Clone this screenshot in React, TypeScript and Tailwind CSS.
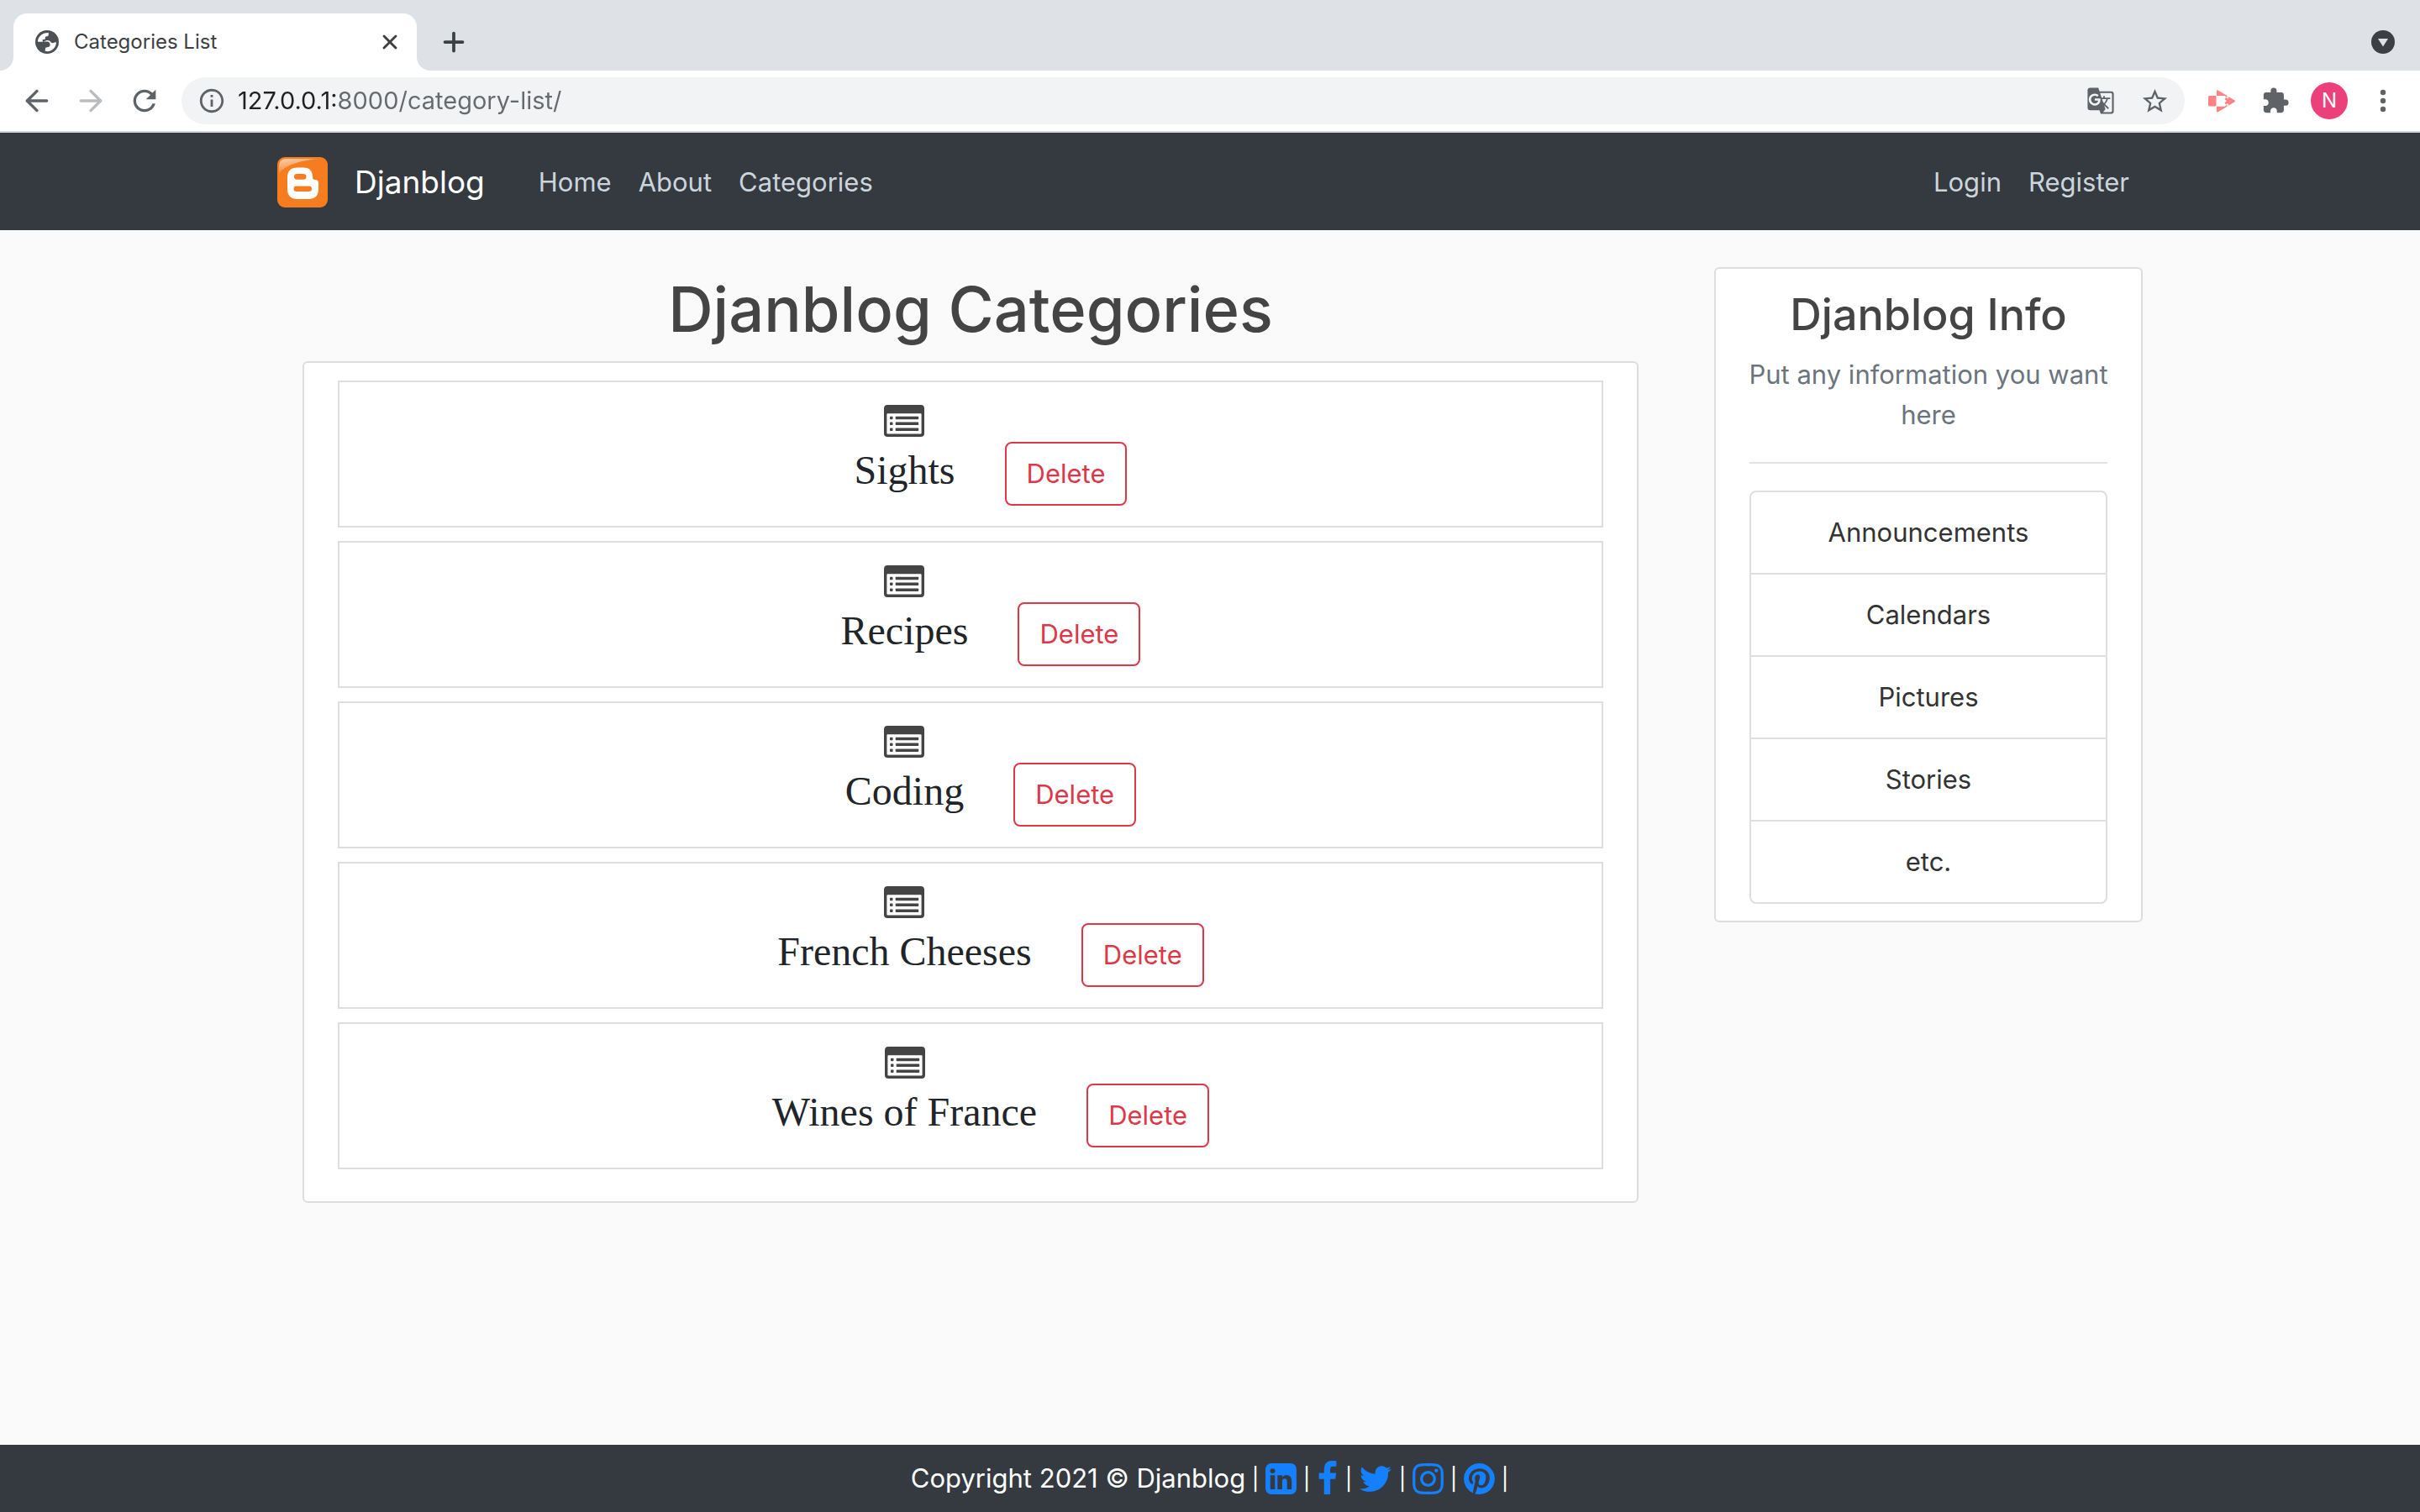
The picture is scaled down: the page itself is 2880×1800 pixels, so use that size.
import React from "react";
import { ArrowLeft, ArrowRight, Plus, X } from "lucide-react";
import { MdExtension, MdGTranslate, MdInfoOutline, MdRefresh, MdStarBorder } from "react-icons/md";

const categories = ["Sights", "Recipes", "Coding", "French Cheeses", "Wines of France"];
const infoItems = ["Announcements", "Calendars", "Pictures", "Stories", "etc."];

const socials = [
  {
    name: "LinkedIn",
    viewBox: "128 0 1536 1792",
    size: "w-[37px]",
    d: "M365 1414h231v-694h-231v694zm246-908q-1-52-36-86t-93-34-94.5 34-36.5 86q0 51 35.5 85.5t92.5 34.5h1q59 0 95-34.5t36-85.5zm585 908h231v-398q0-154-73-233t-193-79q-136 0-209 117h2v-101h-231q3 66 0 694h231v-388q0-38 7-56 15-35 45-59.5t74-24.5q116 0 116 157v371zm468-998v960q0 119-84.5 203.5t-203.5 84.5h-960q-119 0-203.5-84.5t-84.5-203.5v-960q0-119 84.5-203.5t203.5-84.5h960q119 0 203.5 84.5t84.5 203.5z",
  },
  {
    name: "Facebook",
    viewBox: "369 0 1084 1792",
    size: "w-[26px]",
    d: "M1343 12v264h-157q-86 0-116 36t-30 108v189h293l-39 296h-254v759h-306v-759h-255v-296h255v-218q0-186 104-288.5t277-102.5q147 0 228 12z",
  },
  {
    name: "Twitter",
    viewBox: "62 0 1667 1792",
    size: "w-[40px]",
    d: "M1684 408q-67 98-162 167 1 14 1 42 0 130-38 259.5t-115.5 248.5-184.5 210.5-258 146-323 54.5q-271 0-496-145 35 4 78 4 225 0 401-138-105-2-188-64.5t-114-159.5q33 5 61 5 43 0 85-11-112-23-185.5-111.5t-73.5-205.5v-4q68 38 146 41-66-44-105-115t-39-154q0-88 44-163 121 149 294.5 238.5t371.5 99.5q-8-38-8-74 0-134 94.5-228.5t228.5-94.5q140 0 236 102 109-21 205-78-37 115-142 178 93-10 186-50z",
  },
  {
    name: "Instagram",
    viewBox: "128 0 1536 1792",
    size: "w-[37px]",
    d: "M1152 896q0-106-75-181t-181-75-181 75-75 181 75 181 181 75 181-75 75-181zm138 0q0 164-115 279t-279 115-279-115-115-279 115-279 279-115 279 115 115 279zm108-410q0 38-27 65t-65 27-65-27-27-65 27-65 65-27 65 27 27 65zm-502-220q-7 0-76.5-.5t-105.5 0-96.5 3-103 10-71.5 18.5q-50 20-88 58t-58 88q-11 29-18.5 71.5t-10 103-3 96.5 0 105.5.5 76.5-.5 76.5 0 105.5 3 96.5 10 103 18.5 71.5q20 50 58 88t88 58q29 11 71.5 18.5t103 10 96.5 3 105.5 0 76.5-.5 76.5.5 105.5 0 96.5-3 103-10 71.5-18.5q50-20 88-58t58-88q11-29 18.5-71.5t10-103 3-96.5 0-105.5-.5-76.5.5-76.5 0-105.5-3-96.5-10-103-18.5-71.5q-20-50-58-88t-88-58q-29-11-71.5-18.5t-103-10-96.5-3-105.5 0-76.5.5zm768 630q0 229-5 317-10 208-124 322t-322 124q-88 5-317 5t-317-5q-208-10-322-124t-124-322q-5-88-5-317t5-317q10-208 124-322t322-124q88-5 317-5t317 5q208 10 322 124t124 322q5 88 5 317z",
  },
  {
    name: "Pinterest",
    viewBox: "128 0 1536 1792",
    size: "w-[37px]",
    d: "M1664 896q0 209-103 385.5t-279.5 279.5-385.5 103q-111 0-218-32 59-93 78-164 9-34 54-211 20 39 73 67.5t114 28.5q121 0 216-68.5t147-188.5 52-270q0-114-59.5-214t-172.5-163-255-63q-105 0-196 29t-154.5 77-109 110.5-67 129.5-21.5 134q0 104 40 183t117 111q30 12 38-20 2-7 8-31t8-30q6-23-11-43-51-61-51-151 0-151 104.5-259.5t273.5-108.5q151 0 235.5 82t84.5 213q0 170-68.5 289t-175.5 119q-61 0-98-43.5t-23-104.5q8-35 26.5-93.5t30-103 11.5-75.5q0-50-27-83t-77-33q-62 0-105 57t-43 142q0 73 25 122l-99 418q-17 70-13 177-206-91-333-281t-127-423q0-209 103-385.5t279.5-279.5 385.5-103 385.5 103 279.5 279.5 103 385.5z",
  },
];

function GlobeIcon() {
  return (
    <svg viewBox="0 0 28 28" className="size-7 shrink-0" aria-hidden="true">
      <circle cx="14" cy="14" r="14" fill="#4d5156" />
      <path
        fill="#fff"
        d="M3 13.8C3 8 8 3 15.8 3.1V5.2C15.8 6.6 14.8 7.2 13.6 7.2C12.2 7.2 11.6 8 11.8 9.4C11.9 10.6 11 11 9.6 11.1C8.6 11.2 8.4 12.4 9 13.6H14.4C16.2 13.8 17.6 15.2 17.6 17C17.6 19.4 16 20.2 14.2 20.2C12.4 20.2 11.8 21 11.8 22.4L11.6 24.8C18.6 26.6 25 21 24.9 14.2L23 14.4C21.4 15.6 19.6 15.4 18.4 14.2C17.2 12.8 16.4 11.4 12.4 12.4L9 13.8Z"
      />
    </svg>
  );
}

function ArrowExtensionIcon() {
  return (
    <svg viewBox="0 0 32 27" className="h-[27px] w-8" fill="#ff8383" aria-hidden="true">
      <path d="M1.5 7H9.5V19.5H1.5Q0 19.5 0 18V8.500Q0 7 1.500 7Z" />
      <path d="M10 1.2Q10 -.5 11.600 .4L22.500 7V9.200L19.500 7H10Z" />
      <path d="M10 25.600Q10 27.200 11.600 26.300L22.500 19.700V17.500L19.500 19.700H10Z" />
      <path d="M23.800 7.900L31.200 12.300Q32.600 13.300 31.200 14.400L23.800 18.800V16L21 17.600L19.500 15.500L22 13.300L19.500 11L21 9L23.800 10.700Z" />
    </svg>
  );
}

function BloggerLogo() {
  return (
    <svg viewBox="0 0 60 60" className="size-[60px]" aria-hidden="true">
      <defs>
        <linearGradient id="gloss" x1="0" y1="0" x2="0.5" y2="1">
          <stop offset="0" stopColor="#fff" stopOpacity="0.65" />
          <stop offset="1" stopColor="#fff" stopOpacity="0" />
        </linearGradient>
      </defs>
      <rect width="60" height="60" rx="9" fill="#f57d20" />
      <path d="M2 19V11Q2 2 11 2H49C30 4 12 8 2 19Z" fill="url(#gloss)" />
      <path
        fill="#fff"
        fillRule="evenodd"
        d="M24 12.500H31Q42 12.500 42 24Q42 27 45 27Q49 27.200 49 31V38Q49 50 37 50H24Q12 50 12 38V24Q12 12.500 24 12.500ZM23.500 20Q20 20 20 23.300Q20 26.700 23.500 26.700H31Q34.500 26.700 34.500 23.300Q34.500 20 31 20ZM23 34.500Q19.500 34.500 19.500 37.800Q19.500 41 23 41H37.500Q41 41 41 37.800Q41 34.500 37.500 34.500Z"
      />
    </svg>
  );
}

function ListIcon() {
  return (
    <svg viewBox="0 0 48 38" className="h-[38px] w-12" aria-hidden="true">
      <path
        fill="#444"
        fillRule="evenodd"
        d="M4.300 0H43.700Q48 0 48 4.300V33.700Q48 38 43.700 38H4.300Q0 38 0 33.700V4.300Q0 0 4.300 0ZM4.300 10.300Q3.400 10.300 3.400 11.200V33.500Q3.400 34.400 4.300 34.400H43.700Q44.600 34.400 44.600 33.500V11.200Q44.600 10.300 43.700 10.300Z"
      />
      <g fill="#444">
        <rect x="7" y="13.700" width="3.500" height="3.500" rx="0.800" />
        <rect x="7" y="20.600" width="3.500" height="3.500" rx="0.800" />
        <rect x="7" y="27.500" width="3.500" height="3.500" rx="0.800" />
        <rect x="13.700" y="13.700" width="27.500" height="3.500" rx="0.800" />
        <rect x="13.700" y="20.600" width="27.500" height="3.500" rx="0.800" />
        <rect x="13.700" y="27.500" width="27.500" height="3.500" rx="0.800" />
      </g>
    </svg>
  );
}

function BrowserChrome() {
  return (
    <div>
      <div className="flex items-center bg-[#dee1e6] pt-4 pr-[30px]">
        <svg viewBox="0 0 16 16" className="size-4 self-end" aria-hidden="true">
          <path d="M16 0V16H0A16 16 0 0 0 16 0Z" fill="#fff" />
        </svg>
        <div className="flex h-[68px] w-[480px] items-center rounded-t-2xl bg-white pr-[18px] pl-[26px]">
          <GlobeIcon />
          <span className="ml-[18px] flex-1 text-2xl text-[#3c4043]">Categories List</span>
          <button aria-label="Close tab" className="text-[#3c4043]">
            <X size={28} strokeWidth={2.500} />
          </button>
        </div>
        <svg viewBox="0 0 16 16" className="size-4 self-end" aria-hidden="true">
          <path d="M0 0V16H16A16 16 0 0 1 0 0Z" fill="#fff" />
        </svg>
        <button aria-label="New tab" className="ml-2.5 text-[#3c4043]">
          <Plus size={36} strokeWidth={2.500} />
        </button>
        <button aria-label="Search tabs" className="ml-auto">
          <svg viewBox="0 0 28 28" className="size-7">
            <circle cx="14" cy="14" r="14" fill="#3c4043" />
            <path d="M8 10H20L14 19.500Z" fill="#dee1e6" />
          </svg>
        </button>
      </div>
      <div className="flex h-[74px] items-center border-b-2 border-[#d5d7da] bg-white pr-[38px] pl-6 text-[#5f6368]">
        <div className="flex gap-6">
          <button aria-label="Back">
            <ArrowLeft size={40} strokeWidth={2} />
          </button>
          <button aria-label="Forward" className="text-[#babcbe]">
            <ArrowRight size={40} strokeWidth={2} />
          </button>
          <button aria-label="Reload">
            <MdRefresh size={40} />
          </button>
        </div>
        <div className="ml-6 flex h-14 flex-1 items-center rounded-full bg-[#f1f3f4] pr-[18px] pl-[19px]">
          <MdInfoOutline size={34} />
          <input
            aria-label="Address"
            defaultValue="127.0.0.1:8000/category-list/"
            className="ml-3.5 min-w-0 flex-1 bg-[linear-gradient(to_right,#202124_119px,#66696d_119px)] bg-clip-text text-[29px] text-transparent outline-none"
          />
          <button aria-label="Translate this page">
            <MdGTranslate size={34} />
          </button>
          <button aria-label="Bookmark this page" className="ml-[30px]">
            <MdStarBorder size={35} />
          </button>
        </div>
        <button aria-label="Recorder extension" className="ml-7">
          <ArrowExtensionIcon />
        </button>
        <button aria-label="Extensions" className="ml-[31px]">
          <MdExtension size={34} />
        </button>
        <button
          aria-label="Profile"
          className="ml-[25px] flex size-11 items-center justify-center rounded-full bg-[#ec407a] text-2xl text-white"
        >
          N
        </button>
        <button aria-label="Browser menu" className="ml-9">
          <svg viewBox="0 0 12 28" className="h-7 w-3" fill="currentColor">
            <circle cx="6" cy="4" r="3.200" />
            <circle cx="6" cy="14" r="3.200" />
            <circle cx="6" cy="24" r="3.200" />
          </svg>
        </button>
      </div>
    </div>
  );
}

function SiteHeader() {
  return (
    <header className="bg-[#353a41]">
      <nav className="mx-auto flex h-[116px] max-w-[2280px] items-center pt-0.5 pr-[46px] pl-[30px] text-[#cbd5db]">
        <a href="#home" className="flex items-center gap-8 text-[37px] text-white">
          <BloggerLogo />
          Djanblog
        </a>
        <div className="ml-16 flex gap-8">
          <a href="#home">Home</a>
          <a href="#about">About</a>
          <a href="#categories">Categories</a>
        </div>
        <div className="ml-auto flex gap-8">
          <a href="#login">Login</a>
          <a href="#register">Register</a>
        </div>
      </nav>
    </header>
  );
}

function CategoryRow({ name }: { name: string }) {
  return (
    <li className="grid grid-cols-[1fr_auto_1fr] items-end border-2 border-[#dedede] pt-[27px] pr-[157px] pb-6">
      <a
        href="#category"
        className="col-start-2 flex flex-col items-center gap-3 pb-3.5 font-['Liberation_Serif',serif] text-5xl leading-14 text-[#212529]"
      >
        <ListIcon />
        {name}
      </a>
      <button className="ml-[59px] justify-self-start rounded-lg border-2 border-[#dc3848] px-6 py-3 leading-12 text-[#dc3848]">
        Delete
      </button>
    </li>
  );
}

function Sidebar() {
  return (
    <aside className="w-[510px] rounded-md border-2 border-[#dddddd] bg-white px-10 pt-[23px] pb-5 text-center">
      <h3 className="text-[52px] leading-16 font-medium text-[#444]">Djanblog Info</h3>
      <p className="-mx-2 mt-[15px] leading-12 text-[#6c757d]">Put any information you want here</p>
      <hr className="my-8 border-t-2 border-[#e3e3e3]" />
      <ul className="divide-y-2 divide-[#dfdfdf] rounded-lg border-2 border-[#dfdfdf] text-[#333]">
        {infoItems.map((item) => (
          <li key={item} className="py-6 leading-12">
            {item}
          </li>
        ))}
      </ul>
    </aside>
  );
}

function Separator() {
  return <span className="w-2.5 text-center text-[26px]">|</span>;
}

export default function App() {
  return (
    <div className="flex min-h-screen flex-col bg-[#fafafa] font-['Inter',sans-serif] text-[31px]">
      <BrowserChrome />
      <SiteHeader />
      <div className="mx-auto flex w-full max-w-[2280px] flex-1 items-start gap-[90px] px-[30px] pt-11">
        <main className="ml-[30px] flex-1">
          <h1 className="mb-3 text-center text-[74px] leading-[100px] font-medium text-[#444]">Djanblog Categories</h1>
          <ul className="flex flex-col gap-4 rounded-md border-2 border-[#dddddd] bg-white px-10 pt-[21px] pb-[38px]">
            {categories.map((name) => (
              <CategoryRow key={name} name={name} />
            ))}
          </ul>
        </main>
        <Sidebar />
      </div>
      <footer className="flex h-20 items-center justify-center gap-[7px] bg-[#353a41] text-white">
        <span>Copyright 2021 © Djanblog</span>
        <Separator />
        {socials.map((social) => (
          <React.Fragment key={social.name}>
            <a href="#social" aria-label={social.name} className="text-[#1580ff]">
              <svg viewBox={social.viewBox} className={`h-[43px] ${social.size}`} fill="currentColor">
                <path d={social.d} />
              </svg>
            </a>
            <Separator />
          </React.Fragment>
        ))}
      </footer>
    </div>
  );
}
